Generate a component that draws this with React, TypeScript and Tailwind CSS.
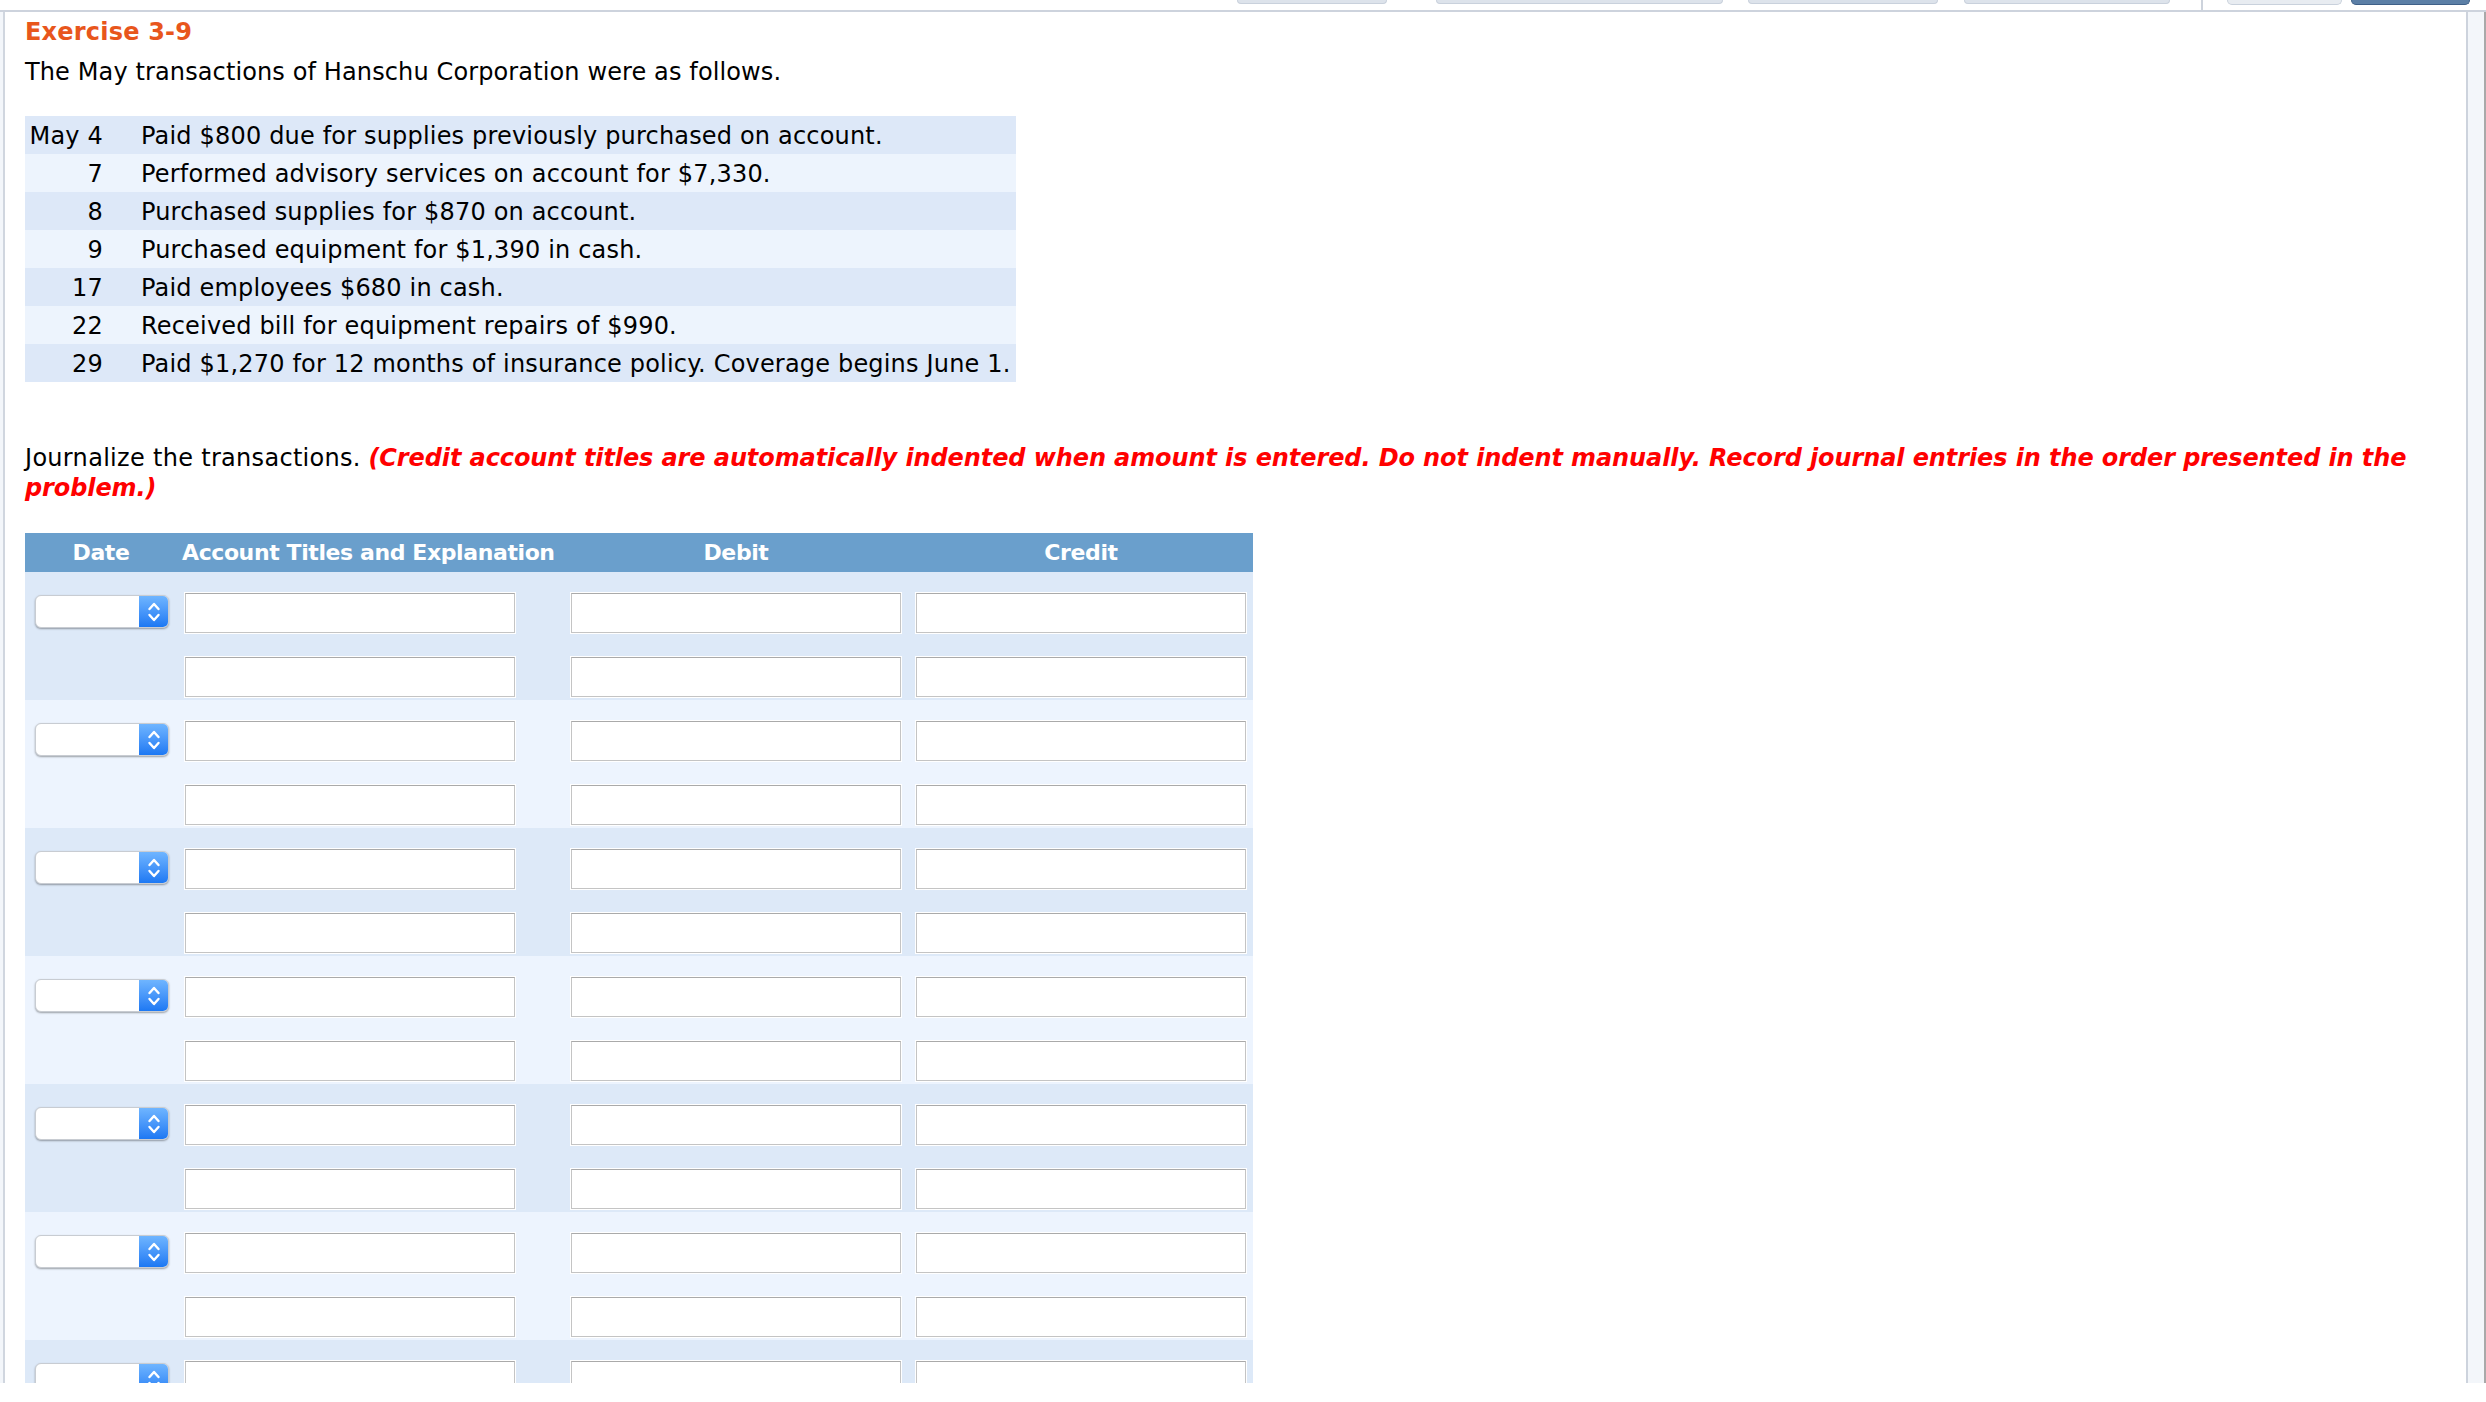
import React from "react";

const TRANSACTIONS = [
    { day: "May 4", text: "Paid $800 due for supplies previously purchased on account." },
    { day: "7", text: "Performed advisory services on account for $7,330." },
    { day: "8", text: "Purchased supplies for $870 on account." },
    { day: "9", text: "Purchased equipment for $1,390 in cash." },
    { day: "17", text: "Paid employees $680 in cash." },
    { day: "22", text: "Received bill for equipment repairs of $990." },
    { day: "29", text: "Paid $1,270 for 12 months of insurance policy. Coverage begins June 1." },
];

const GROUPS = [0, 1, 2, 3, 4, 5, 6];

function Chevrons() {
    return (
        <svg width="16" height="26" viewBox="0 0 16 26" fill="none">
            <path d="M3.5 10 L8 5 L12.5 10" stroke="white" strokeWidth="2.4" strokeLinecap="round" strokeLinejoin="round" />
            <path d="M3.5 16 L8 21 L12.5 16" stroke="white" strokeWidth="2.4" strokeLinecap="round" strokeLinejoin="round" />
        </svg>
    );
}

function DateSelect() {
    return (
        <div className="ml-[10px] mt-[23px] flex h-[33px] w-[134px] rounded-[6px] bg-white shadow-[0_1px_2px_rgba(0,0,0,0.35)] border border-[#c8ccd2] overflow-hidden">
            <div className="flex-1" />
            <div className="w-[29px] flex items-center justify-center bg-gradient-to-b from-[#6fb5ff] to-[#1c78f3]">
                <Chevrons />
            </div>
        </div>
    );
}

function Field({ ml }: { ml: string }) {
    return (
        <div className={`${ml} mt-[21px] h-[40px] w-[330px] bg-white border border-[#c4c4c4] border-t-[#aaaaaa] shadow-[0_0_0_1px_#ffffff]`} />
    );
}

function JournalRow({ first }: { first: boolean }) {
    return (
        <div className="grid grid-cols-[152px_386px_346px_344px] h-[64px]">
            <div>{first && <DateSelect />}</div>
            <div><Field ml="ml-[8px]" /></div>
            <div><Field ml="ml-[8px]" /></div>
            <div><Field ml="ml-[7px]" /></div>
        </div>
    );
}

export default function App() {
    return (
        <div className="w-[2486px] h-[1402px] bg-white overflow-hidden font-['DejaVu_Sans',sans-serif] text-black">
            {/* top toolbar, scrolled off */}
            <div className="h-[10px] flex items-start">
                <div className="ml-[1237px] h-[4px] w-[150px] rounded-b-[5px] bg-[#dde3eb] border border-t-0 border-[#c9d1dc]" />
                <div className="ml-[49px] h-[4px] w-[287px] rounded-b-[5px] bg-[#dde3eb] border border-t-0 border-[#c9d1dc]" />
                <div className="ml-[25px] h-[4px] w-[190px] rounded-b-[5px] bg-[#dde3eb] border border-t-0 border-[#c9d1dc]" />
                <div className="ml-[26px] h-[4px] w-[206px] rounded-b-[5px] bg-[#dde3eb] border border-t-0 border-[#c9d1dc]" />
                <div className="ml-[31px] h-[10px] w-[2px] bg-[#cdd3dc]" />
                <div className="ml-[24px] h-[5px] w-[115px] rounded-b-[6px] bg-[#e8ecf1] border border-t-0 border-[#c9d1dc]" />
                <div className="ml-[9px] h-[5px] w-[119px] rounded-b-[6px] bg-[#5c7fa6] border border-t-0 border-[#3f6088]" />
            </div>
            <div className="h-[2px] bg-[#cdd3dd]" />

            <div className="flex h-[1371px]">
                <div className="w-[3px] bg-[#f3f6fa]" />
                <div className="w-[2px] bg-[#d0d6df]" />

                <div className="flex-1 h-[1371px] overflow-hidden pl-[20px] pr-[20px]">
                    <h1 className="pt-[5px] text-[24px] leading-[30px] font-bold text-[#e8561c] tracking-[0.2px]">Exercise 3-9</h1>
                    <p className="mt-[10px] text-[24px] leading-[30px] tracking-[0.12px]">
                        The May transactions of Hanschu Corporation were as follows.
                    </p>

                    <div className="mt-[29px] w-[991px] text-[24px] tracking-[0.18px]">
                        {TRANSACTIONS.map((t, i) => (
                            <div
                                key={t.day}
                                className={`flex h-[38px] items-center pt-[2px] ${i % 2 === 0 ? "bg-[#dde8f8]" : "bg-[#edf4fd]"}`}
                            >
                                <div className="w-[85px] pr-[7px] text-right">{t.day}</div>
                                <div className="pl-[31px]">{t.text}</div>
                            </div>
                        ))}
                    </div>

                    <p className="mt-[61px] text-[24px] leading-[30px]">
                        <span className="tracking-[0.3px]">Journalize the transactions.</span>{" "}
                        <span className="font-bold italic text-[#ff0000] tracking-[-0.1px]">
                            (Credit account titles are automatically indented when amount is entered. Do not indent manually. Record journal entries in the order presented in the problem.)
                        </span>
                    </p>

                    <div className="mt-[30px] w-[1228px]">
                        <div className="grid grid-cols-[152px_386px_346px_344px] h-[39px] items-center bg-[#6a9fcc] text-white text-[22px] font-bold tracking-[-0.4px]">
                            <div className="text-center">Date</div>
                            <div className="pl-[5px]">Account Titles and Explanation</div>
                            <div className="text-center">Debit</div>
                            <div className="text-center">Credit</div>
                        </div>
                        {GROUPS.map((g) => (
                            <div key={g} className={g % 2 === 0 ? "bg-[#dde9f8]" : "bg-[#edf4fe]"}>
                                <JournalRow first />
                                <JournalRow first={false} />
                            </div>
                        ))}
                    </div>
                </div>

                <div className="w-[2px] bg-[#cdd3dd]" />
                <div className="w-[16px] bg-[#f3f6fa]" />
                <div className="w-[2px] bg-[#a9a9a9]" />
            </div>
        </div>
    );
}
